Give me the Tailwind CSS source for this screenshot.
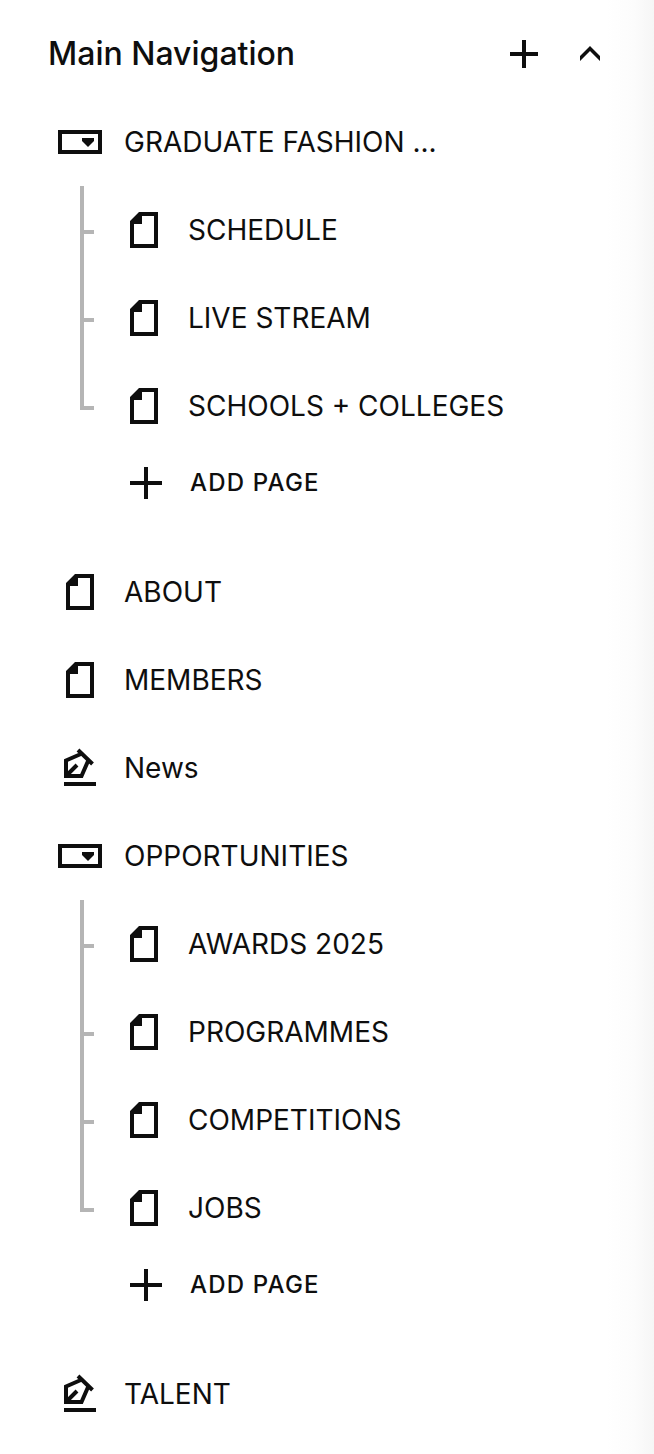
<!DOCTYPE html>
<html lang="en">
<head>
    <meta charset="UTF-8">
    <meta name="viewport" content="width=device-width, initial-scale=1.0">
    <title>Main Navigation</title>
    <script src="https://cdn.jsdelivr.net/npm/@tailwindcss/browser@4"></script>
</head>
<body class="bg-white font-['Inter',sans-serif] text-[#0e0e0e] min-h-screen">
    <!-- Icons -->
    <svg class="hidden">
        <symbol id="icon-page" viewBox="0 0 28 36">
            <path fill="currentColor" fill-rule="evenodd" d="M9 0H28V36H0V9ZM12 4V12H4V32H24V4Z" />
        </symbol>
        <symbol id="icon-folder" viewBox="0 0 44 24">
            <path fill="currentColor" fill-rule="evenodd" d="M0 0H44V24H0ZM4 4V20H40V4Z" />
            <path fill="currentColor" d="M24 8H36V11L30 17L24 11Z" />
        </symbol>
        <symbol id="icon-blog" viewBox="0 0 32 40">
            <path fill="none" stroke="currentColor" stroke-width="4" d="M14 2L28.5 16M18 5.5L2 12.5V28H17.5L24.5 12M2 28L13 17M0 36H32" />
        </symbol>
        <symbol id="icon-plus" viewBox="0 0 32 32">
            <path fill="currentColor" d="M14 0H18V14H32V18H18V32H14V18H0V14H14Z" />
        </symbol>
    </svg>

    <div class="min-h-screen bg-linear-to-l from-[#f6f6f6] via-[#fcfcfc] via-[20px] to-white to-[48px]">
        <!-- Header -->
        <header class="flex items-center pt-5 pb-2.5 pl-12 pr-10">
            <h2 class="flex-1 text-[32px] leading-[68px] font-medium">Main Navigation</h2>
            <button type="button" aria-label="Add page" class="p-2">
                <svg class="size-7" viewBox="0 0 28 28"><path fill="currentColor" d="M12 0H16V12H28V16H16V28H12V16H0V12H12Z" /></svg>
            </button>
            <button type="button" aria-label="Collapse" class="ml-5 p-3.5">
                <svg class="w-5 h-4" viewBox="0 0 20 16"><path fill="currentColor" d="M10 0L20 10V15L10 5L0 15V10Z" /></svg>
            </button>
        </header>

        <!-- Pages -->
        <nav aria-label="Main Navigation" class="text-[28px] leading-10">
            <ul>
                <li>
                    <a href="#" class="flex items-center h-22 pl-[58px]">
                        <svg class="w-11 h-6 mr-[22px]"><use href="#icon-folder" /></svg>
                        GRADUATE FASHION ...
                    </a>
                    <ul class="pl-20">
                        <li class="flex h-22">
                            <div class="flex flex-col w-3.5 mr-9">
                                <div class="h-12 border-l-4 border-b-4 border-[#b5b5b5]"></div>
                                <div class="flex-1 border-l-4 border-[#b5b5b5]"></div>
                            </div>
                            <a href="#" class="flex items-center"><svg class="w-7 h-9 mr-[30px]"><use href="#icon-page" /></svg>SCHEDULE</a>
                        </li>
                        <li class="flex h-22">
                            <div class="flex flex-col w-3.5 mr-9">
                                <div class="h-12 border-l-4 border-b-4 border-[#b5b5b5]"></div>
                                <div class="flex-1 border-l-4 border-[#b5b5b5]"></div>
                            </div>
                            <a href="#" class="flex items-center"><svg class="w-7 h-9 mr-[30px]"><use href="#icon-page" /></svg>LIVE STREAM</a>
                        </li>
                        <li class="flex h-22">
                            <div class="w-3.5 h-12 mr-9 border-l-4 border-b-4 border-[#b5b5b5]"></div>
                            <a href="#" class="flex items-center"><svg class="w-7 h-9 mr-[30px]"><use href="#icon-page" /></svg>SCHOOLS + COLLEGES</a>
                        </li>
                    </ul>
                    <button type="button" class="flex items-center h-[66px] ml-[130px] mb-8 text-2xl font-medium tracking-wider">
                        <svg class="size-8 mr-7"><use href="#icon-plus" /></svg>ADD PAGE
                    </button>
                </li>
                <li>
                    <a href="#" class="flex items-center h-22 pl-[66px]">
                        <svg class="w-7 h-9 mr-[30px]"><use href="#icon-page" /></svg>
                        ABOUT
                    </a>
                </li>
                <li>
                    <a href="#" class="flex items-center h-22 pl-[66px]">
                        <svg class="w-7 h-9 mr-[30px]"><use href="#icon-page" /></svg>
                        MEMBERS
                    </a>
                </li>
                <li>
                    <a href="#" class="flex items-center h-22 pl-16">
                        <svg class="w-8 h-10 mr-7"><use href="#icon-blog" /></svg>
                        News
                    </a>
                </li>
                <li>
                    <a href="#" class="flex items-center h-22 pl-[58px]">
                        <svg class="w-11 h-6 mr-[22px]"><use href="#icon-folder" /></svg>
                        OPPORTUNITIES
                    </a>
                    <ul class="pl-20">
                        <li class="flex h-22">
                            <div class="flex flex-col w-3.5 mr-9">
                                <div class="h-12 border-l-4 border-b-4 border-[#b5b5b5]"></div>
                                <div class="flex-1 border-l-4 border-[#b5b5b5]"></div>
                            </div>
                            <a href="#" class="flex items-center"><svg class="w-7 h-9 mr-[30px]"><use href="#icon-page" /></svg>AWARDS 2025</a>
                        </li>
                        <li class="flex h-22">
                            <div class="flex flex-col w-3.5 mr-9">
                                <div class="h-12 border-l-4 border-b-4 border-[#b5b5b5]"></div>
                                <div class="flex-1 border-l-4 border-[#b5b5b5]"></div>
                            </div>
                            <a href="#" class="flex items-center"><svg class="w-7 h-9 mr-[30px]"><use href="#icon-page" /></svg>PROGRAMMES</a>
                        </li>
                        <li class="flex h-22">
                            <div class="flex flex-col w-3.5 mr-9">
                                <div class="h-12 border-l-4 border-b-4 border-[#b5b5b5]"></div>
                                <div class="flex-1 border-l-4 border-[#b5b5b5]"></div>
                            </div>
                            <a href="#" class="flex items-center"><svg class="w-7 h-9 mr-[30px]"><use href="#icon-page" /></svg>COMPETITIONS</a>
                        </li>
                        <li class="flex h-22">
                            <div class="w-3.5 h-12 mr-9 border-l-4 border-b-4 border-[#b5b5b5]"></div>
                            <a href="#" class="flex items-center"><svg class="w-7 h-9 mr-[30px]"><use href="#icon-page" /></svg>JOBS</a>
                        </li>
                    </ul>
                    <button type="button" class="flex items-center h-[66px] ml-[130px] mb-8 text-2xl font-medium tracking-wider">
                        <svg class="size-8 mr-7"><use href="#icon-plus" /></svg>ADD PAGE
                    </button>
                </li>
                <li>
                    <a href="#" class="flex items-center h-22 pl-16">
                        <svg class="w-8 h-10 mr-7"><use href="#icon-blog" /></svg>
                        TALENT
                    </a>
                </li>
            </ul>
        </nav>
    </div>
</body>
</html>
